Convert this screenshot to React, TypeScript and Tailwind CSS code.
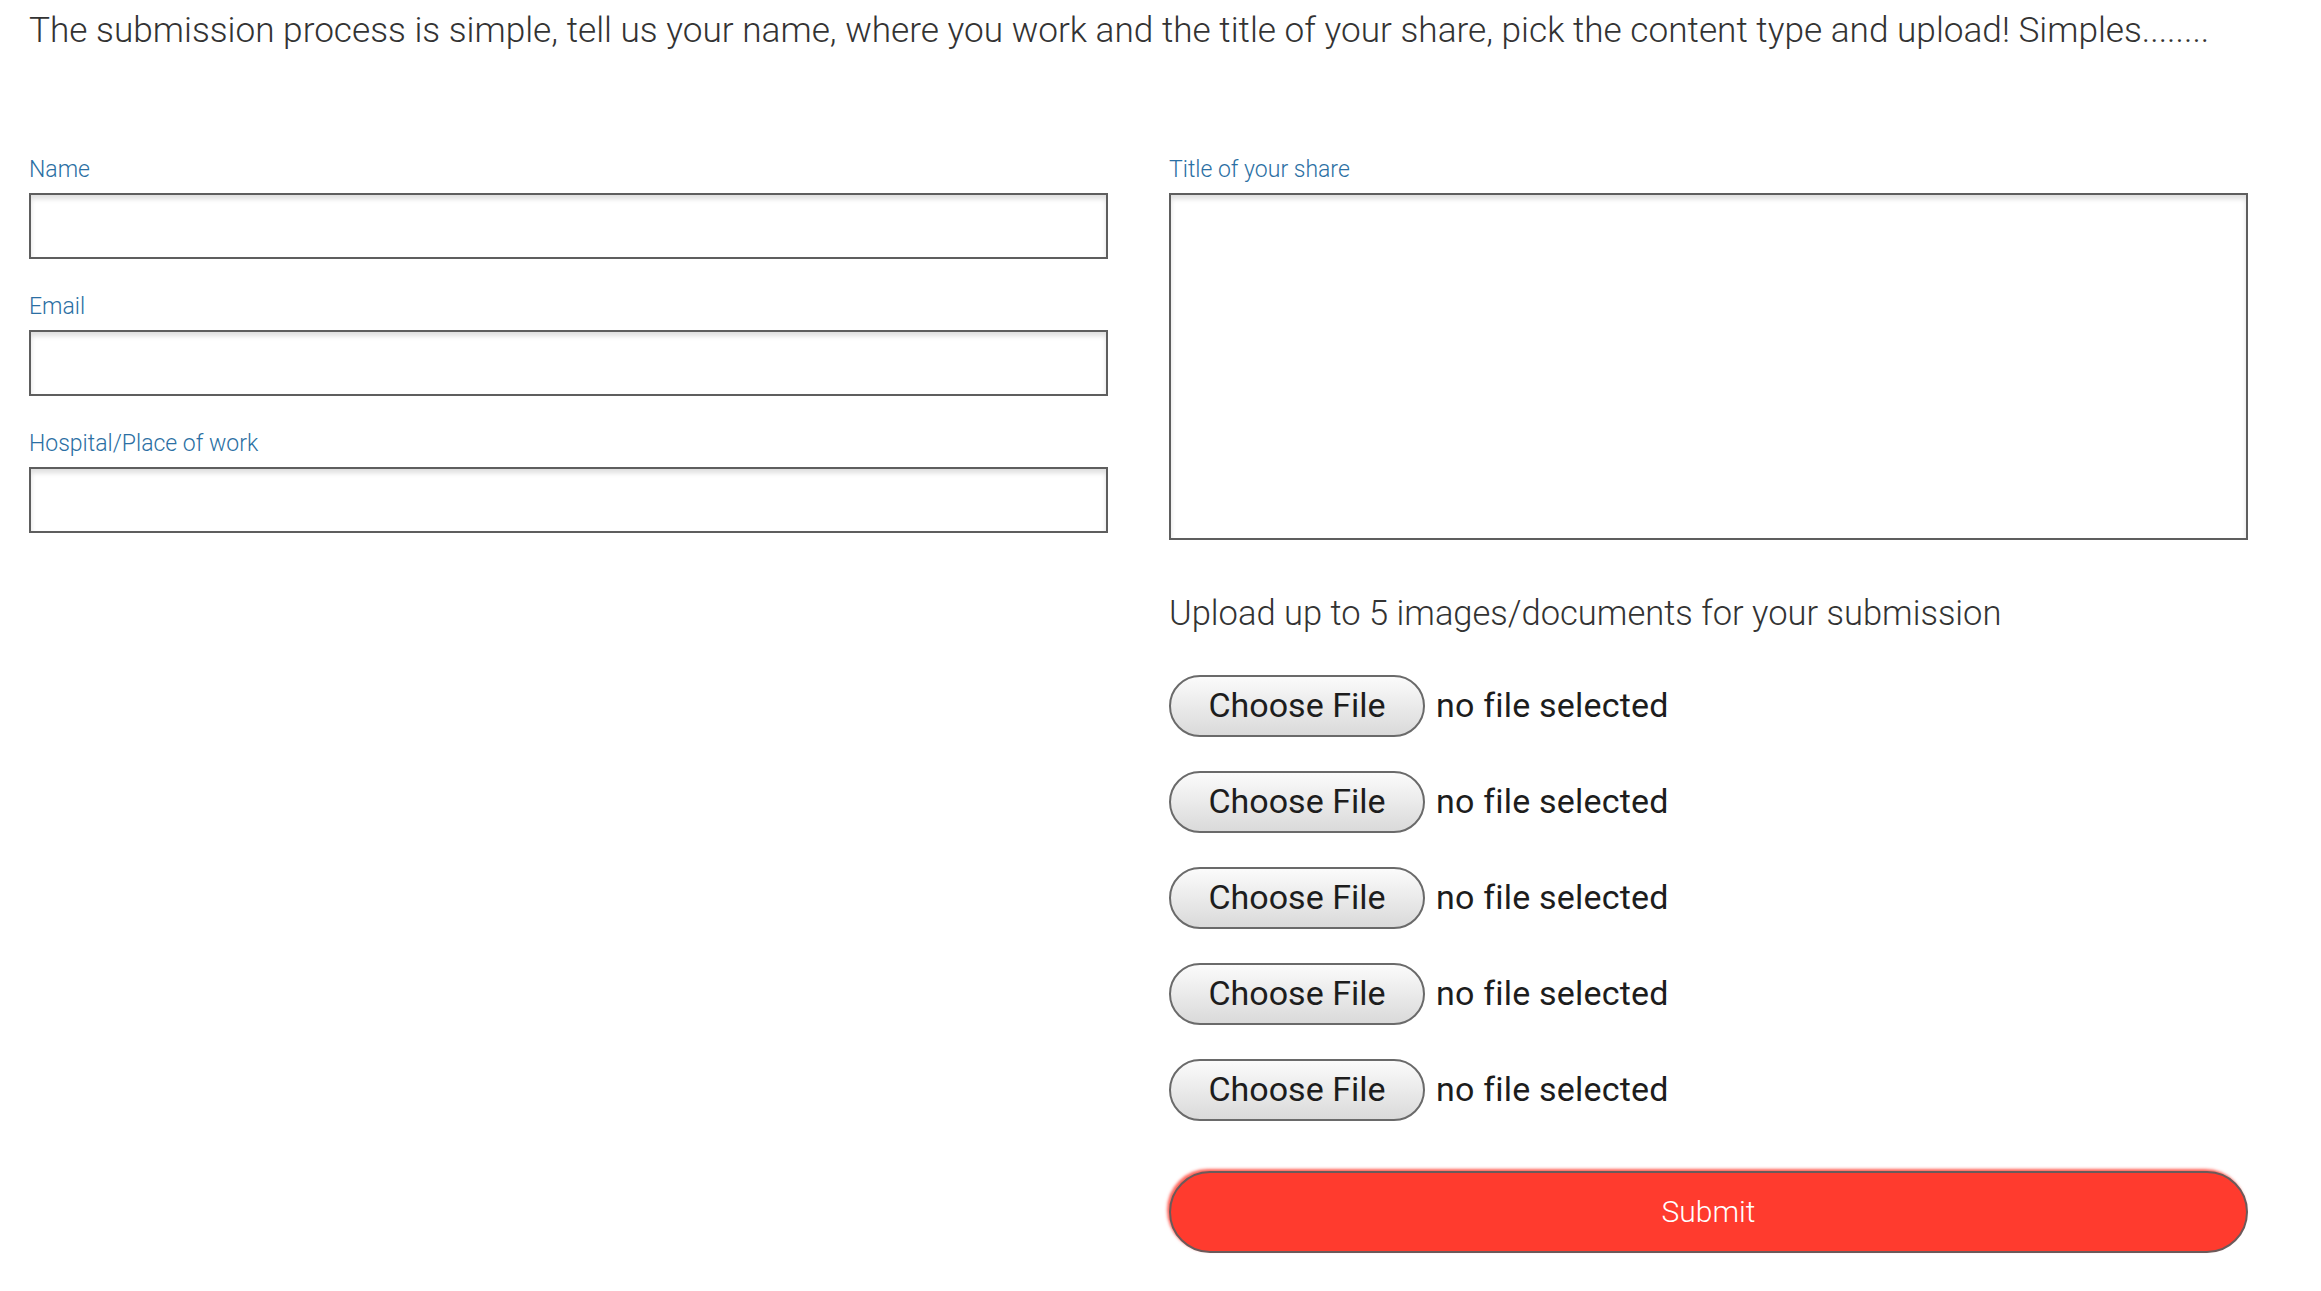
import React from 'react';

const labelCls = "block text-[23px] leading-none font-light text-[#2b6fa3] mb-[12px]";
const boxCls = "block w-full bg-white border-2 border-[#5e5e5e] shadow-[inset_0_4px_5px_rgba(0,0,0,0.13)] outline-none";

const Field: React.FC<{ label: string }> = ({ label }) => (
  <div className="mb-[36px]">
    <label className={labelCls}>{label}</label>
    <input type="text" className={`${boxCls} h-[66px]`} />
  </div>
);

const FileRow: React.FC = () => (
  <div className="flex items-center h-[64px] mb-[32px]">
    <span className="flex items-center justify-center w-[256px] h-[62px] rounded-full border-2 border-[#6a6a6a] bg-gradient-to-b from-[#fbfbfb] to-[#dadada] text-[34px] text-[#1d1d1d]">
      Choose File
    </span>
    <span className="ml-[11px] text-[34px] text-[#1d1d1d] tracking-[0.2px]">no file selected</span>
  </div>
);

export default function App() {
  return (
    <div className="min-h-screen bg-white pl-[29px] pr-[73px] pt-[8px] font-['Roboto','Liberation_Sans',sans-serif]">
      <p className="text-[35.2px] leading-[44px] font-light text-[#333] whitespace-nowrap">
        The submission process is simple, tell us your name, where you work and the title of your share, pick the content type and upload! Simples........
      </p>

      <div className="grid grid-cols-2 gap-x-[61px] mt-[106px]">
        {/* left column */}
        <div>
          <Field label="Name" />
          <Field label="Email" />
          <Field label="Hospital/Place of work" />
        </div>

        {/* right column */}
        <div>
          <label className={labelCls}>Title of your share</label>
          <textarea className={`${boxCls} h-[347px] resize-none`} />

          <p className="mt-[56px] text-[34.5px] leading-none font-light text-[#333]">
            Upload up to 5 images/documents for your submission
          </p>

          <div className="mt-[43px]">
            <FileRow />
            <FileRow />
            <FileRow />
            <FileRow />
            <FileRow />
          </div>

          <button className="w-full h-[82px] mt-[17px] rounded-full bg-[#ff3b2e] border-2 border-[#6b5a5a] shadow-[-2px_-2px_3px_rgba(255,59,46,0.8)] text-white text-[30px] font-light">
            Submit
          </button>
        </div>
      </div>
    </div>
  );
}
